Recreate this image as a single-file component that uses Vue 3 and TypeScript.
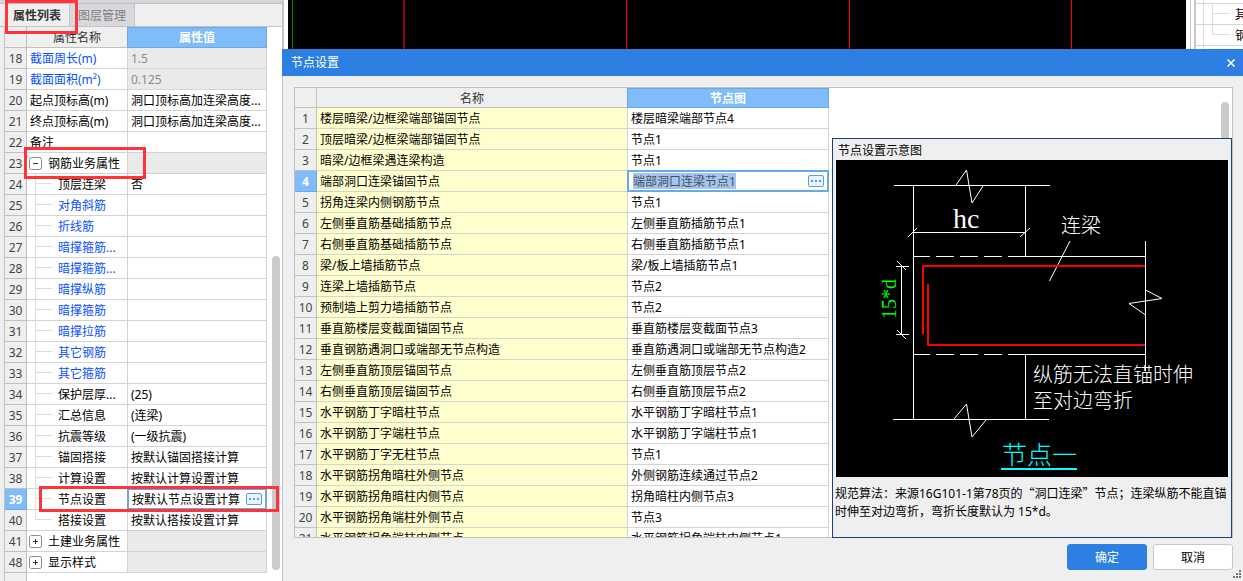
<script setup lang="ts">
import { ref } from 'vue'

type Kind = 'plain' | 'group' | 'child'

interface PropertyRow {
  no: number
  name: string
  value?: string
  kind: Kind
  link?: boolean
  readonly?: boolean
  open?: boolean
  last?: boolean
}

interface NodeRow {
  name: string
  node: string
}

const properties: PropertyRow[] = [
  { no: 18, name: '截面周长(m)', value: '1.5', kind: 'plain', link: true, readonly: true },
  { no: 19, name: '截面面积(m²)', value: '0.125', kind: 'plain', link: true, readonly: true },
  { no: 20, name: '起点顶标高(m)', value: '洞口顶标高加连梁高度...', kind: 'plain' },
  { no: 21, name: '终点顶标高(m)', value: '洞口顶标高加连梁高度...', kind: 'plain' },
  { no: 22, name: '备注', kind: 'plain' },
  { no: 23, name: '钢筋业务属性', kind: 'group', open: true },
  { no: 24, name: '顶层连梁', value: '否', kind: 'child' },
  { no: 25, name: '对角斜筋', kind: 'child', link: true },
  { no: 26, name: '折线筋', kind: 'child', link: true },
  { no: 27, name: '暗撑箍筋...', kind: 'child', link: true },
  { no: 28, name: '暗撑箍筋...', kind: 'child', link: true },
  { no: 29, name: '暗撑纵筋', kind: 'child', link: true },
  { no: 30, name: '暗撑箍筋', kind: 'child', link: true },
  { no: 31, name: '暗撑拉筋', kind: 'child', link: true },
  { no: 32, name: '其它钢筋', kind: 'child', link: true },
  { no: 33, name: '其它箍筋', kind: 'child', link: true },
  { no: 34, name: '保护层厚...', value: '(25)', kind: 'child' },
  { no: 35, name: '汇总信息', value: '(连梁)', kind: 'child' },
  { no: 36, name: '抗震等级', value: '(一级抗震)', kind: 'child' },
  { no: 37, name: '锚固搭接', value: '按默认锚固搭接计算', kind: 'child' },
  { no: 38, name: '计算设置', value: '按默认计算设置计算', kind: 'child' },
  { no: 39, name: '节点设置', value: '按默认节点设置计算', kind: 'child' },
  { no: 40, name: '搭接设置', value: '按默认搭接设置计算', kind: 'child', last: true },
  { no: 41, name: '土建业务属性', kind: 'group' },
  { no: 48, name: '显示样式', kind: 'group' },
]

const nodes = ref<NodeRow[]>([
  { name: '楼层暗梁/边框梁端部锚固节点', node: '楼层暗梁端部节点4' },
  { name: '顶层暗梁/边框梁端部锚固节点', node: '节点1' },
  { name: '暗梁/边框梁遇连梁构造', node: '节点1' },
  { name: '端部洞口连梁锚固节点', node: '端部洞口连梁节点1' },
  { name: '拐角连梁内侧钢筋节点', node: '节点1' },
  { name: '左侧垂直筋基础插筋节点', node: '左侧垂直筋插筋节点1' },
  { name: '右侧垂直筋基础插筋节点', node: '右侧垂直筋插筋节点1' },
  { name: '梁/板上墙插筋节点', node: '梁/板上墙插筋节点1' },
  { name: '连梁上墙插筋节点', node: '节点2' },
  { name: '预制墙上剪力墙插筋节点', node: '节点2' },
  { name: '垂直筋楼层变截面锚固节点', node: '垂直筋楼层变截面节点3' },
  { name: '垂直钢筋遇洞口或端部无节点构造', node: '垂直筋遇洞口或端部无节点构造2' },
  { name: '左侧垂直筋顶层锚固节点', node: '左侧垂直筋顶层节点2' },
  { name: '右侧垂直筋顶层锚固节点', node: '右侧垂直筋顶层节点2' },
  { name: '水平钢筋丁字暗柱节点', node: '水平钢筋丁字暗柱节点1' },
  { name: '水平钢筋丁字端柱节点', node: '水平钢筋丁字端柱节点1' },
  { name: '水平钢筋丁字无柱节点', node: '节点1' },
  { name: '水平钢筋拐角暗柱外侧节点', node: '外侧钢筋连续通过节点2' },
  { name: '水平钢筋拐角暗柱内侧节点', node: '拐角暗柱内侧节点3' },
  { name: '水平钢筋拐角端柱外侧节点', node: '节点3' },
  { name: '水平钢筋拐角端柱内侧节点', node: '水平钢筋拐角端柱内侧节点1' },
])

const currentProperty = ref(39)
const currentNode = ref(3)
</script>

<template>
  <div class="app">
    <aside class="panel">
      <div class="panel-cap"></div>
      <div class="tabs" role="tablist">
        <button class="tab active" role="tab" aria-selected="true">属性列表</button>
        <button class="tab" role="tab" aria-selected="false">图层管理</button>
      </div>
      <div class="panel-body">
        <table class="grid props">
          <colgroup>
            <col class="c-no" />
            <col class="c-name" />
            <col class="c-value" />
          </colgroup>
          <thead>
            <tr>
              <th></th>
              <th>属性名称</th>
              <th class="hot">属性值</th>
            </tr>
          </thead>
          <tbody>
            <tr v-for="row in properties" :key="row.no" @click="currentProperty = row.no">
              <td class="no" :class="{ hot: row.no === currentProperty }">{{ row.no }}</td>
              <td class="name" :class="[row.kind, { link: row.link }]">
                <div class="cell">
                  <button v-if="row.kind === 'group'" class="toggle" :aria-label="row.name">
                    <svg viewBox="0 0 13 13" width="13" height="13">
                      <rect x="0.5" y="0.5" width="12" height="12" rx="2" fill="#fff" stroke="#8a8a8a" />
                      <path d="M4 6.5h5" stroke="#333" />
                      <path v-if="!row.open" d="M6.5 4v5" stroke="#333" />
                    </svg>
                  </button>
                  <i v-if="row.kind === 'child'" class="branch" :class="{ last: row.last }"></i>
                  <span>{{ row.name }}</span>
                </div>
              </td>
              <td
                class="value"
                :class="{ dim: row.readonly || row.kind === 'group', editing: row.no === currentProperty }"
              >
                <div class="cell">
                  <span>{{ row.value }}</span>
                  <button v-if="row.no === currentProperty" class="more" aria-label="更多">
                    <i></i><i></i><i></i>
                  </button>
                </div>
              </td>
            </tr>
          </tbody>
        </table>
        <div class="track"><div class="thumb"></div></div>
      </div>
    </aside>

    <div class="main">
      <div class="backdrop">
        <div class="view">
          <svg width="100%" height="49">
            <rect x="4" width="1" height="49" fill="#008000" />
            <rect x="115" width="2" height="49" fill="#900008" />
            <rect x="338" width="1" height="49" fill="#f00" />
            <rect x="561" width="1" height="49" fill="#f00" />
            <rect x="783" width="1" height="49" fill="#f00" />
          </svg>
        </div>
        <div class="side">
          <div class="side-row"><span>其</span></div>
          <div class="side-row end"><span>钢</span></div>
        </div>
      </div>

      <section class="dialog" role="dialog" aria-labelledby="dialog-title">
        <header class="title">
          <span id="dialog-title">节点设置</span>
          <button class="close" aria-label="关闭">
            <svg viewBox="0 0 8 8" width="8" height="8">
              <path d="M0.5 0.5L7.5 7.5M7.5 0.5L0.5 7.5" stroke="#fff" stroke-width="1.5" />
            </svg>
          </button>
        </header>

        <div class="sheet">
          <div class="sheet-scroll">
            <table class="grid nodes">
              <colgroup>
                <col class="c-no" />
                <col class="c-name" />
                <col class="c-value" />
              </colgroup>
              <thead>
                <tr>
                  <th></th>
                  <th>名称</th>
                  <th class="hot">节点图</th>
                </tr>
              </thead>
              <tbody>
                <tr v-for="(row, i) in nodes" :key="i" @click="currentNode = i">
                  <td class="no" :class="{ hot: i === currentNode }">{{ i + 1 }}</td>
                  <td class="name">
                    <div class="cell"><span>{{ row.name }}</span></div>
                  </td>
                  <td class="value" :class="{ editing: i === currentNode }">
                    <div class="cell">
                      <template v-if="i === currentNode">
                        <input v-model="row.node" class="edit" type="text" :aria-label="row.name" />
                        <button class="more" aria-label="更多"><i></i><i></i><i></i></button>
                      </template>
                      <span v-else>{{ row.node }}</span>
                    </div>
                  </td>
                </tr>
              </tbody>
            </table>
          </div>
          <div class="sheet-thumb"></div>

          <figure class="preview">
            <figcaption>节点设置示意图</figcaption>
            <svg class="drawing" viewBox="0 0 392 317" width="392" height="317">
              <rect width="392" height="317" fill="#000" />
              <g fill="none" stroke="#fff" stroke-width="1">
                <path d="M58 25.5H214M77.5 25.5V259.5M189.5 25.5V96.5M189.5 194.5V259.5M57 259.5H213" />
                <path d="M120 25L130.5 10L136 43L147 26" />
                <path d="M118 259L130.5 244L136 277L150 260" />
                <path d="M77.5 72.5H189.5M72 77L81 68M184 77L194 68" />
                <path d="M77 96.5H94M100 96.5H118M124 96.5H142M148 96.5H166M172 96.5H310" />
                <path d="M77 194.5H94M100 194.5H118M124 194.5H142M148 194.5H166M172 194.5H310" />
                <path d="M309.5 81V211M309.5 130L326 138.5L293 143.5L309.5 155" />
                <path d="M234 81L213.5 121" />
                <path d="M65.5 106.5V174.5M60 106.5H73M60 174.5H73M61 101L70 110M61 170L70 179" />
              </g>
              <g fill="none" stroke="#f00" stroke-width="2">
                <path d="M309 106H87V174" />
                <path d="M92 124V185H309" />
              </g>
              <text class="latin" x="117" y="68" font-size="28" fill="#fff">hc</text>
              <text class="latin" transform="translate(60 159) rotate(-90)" font-size="20" fill="#0f0">15*d</text>
              <text class="song" x="225" y="73" font-size="20" fill="#fff">连梁</text>
              <text class="song" x="197" y="222" font-size="20" fill="#fff">纵筋无法直锚时伸</text>
              <text class="song" x="197" y="248" font-size="20" fill="#fff">至对边弯折</text>
              <text class="song" x="166" y="304" font-size="25" fill="#0ff">节点一</text>
              <path d="M165 309H241" stroke="#0ff" stroke-width="2" />
            </svg>
            <p class="note">
              规范算法：来源16G101-1第78页的<span class="cjk">“洞口连梁”</span>节点；连梁纵筋不能直锚时伸至对边弯折，弯折长度默认为 15*d。
            </p>
          </figure>
        </div>

        <footer class="actions">
          <button class="btn primary">确定</button>
          <button class="btn">取消</button>
        </footer>
        <svg class="grip" viewBox="0 0 8 8" width="8" height="8" fill="#6d7480">
          <path d="M6 0h2v2h-2zM3 3h2v2h-2zM6 3h2v2h-2zM0 6h2v2h-2zM3 6h2v2h-2zM6 6h2v2h-2z" />
        </svg>
      </section>
    </div>

    <div class="mark mark-tab"></div>
    <div class="mark mark-group"></div>
    <div class="mark mark-row"></div>
  </div>
</template>

<style>
body {
  margin: 0;
}
</style>

<style scoped>
.app {
  position: relative;
  display: flex;
  height: 100vh;
  overflow: hidden;
  background: #efefef;
  color: #000;
  font: 12px/20px 'Noto Sans', 'Noto Sans CJK SC', sans-serif;
}

.app * {
  box-sizing: border-box;
}

button,
input {
  margin: 0;
  padding: 0;
  border: 0;
  font: inherit;
}

/* Property panel */
.panel {
  display: flex;
  flex: none;
  flex-direction: column;
  width: 282px;
}

.panel-cap {
  flex: none;
  height: 4px;
  background: #d5d5dd;
  border-bottom: 1px solid #c0c0c0;
}

.tabs {
  display: flex;
  flex: none;
  height: 23px;
  padding-left: 5px;
  border-bottom: 1px solid #c3c3c3;
}

.tab {
  width: 65px;
  padding-top: 2px;
  border-right: 1px solid #c4c4c8;
  background: #d9d9dd;
  color: #808080;
}

.tab.active {
  background: #efefef;
  color: #333;
  font-weight: 700;
}

.panel-body {
  display: flex;
  flex: 1;
  min-height: 0;
  margin-left: 4px;
  border-left: 1px solid #c0c0c0;
  background: linear-gradient(90deg, #efefef 21px, #c0c0c0 21px 22px, #fff 22px);
}

.track {
  flex: 1;
  padding: 229px 2px 0 5px;
}

.thumb {
  width: 8px;
  height: 314px;
  border-radius: 4px;
  background: #cbcbcb;
}

/* Tables */
.grid {
  flex: none;
  align-self: flex-start;
  border-collapse: separate;
  border-spacing: 0;
  table-layout: fixed;
}

.props {
  width: 262px;
}

.nodes {
  width: 534px;
}

.c-no {
  width: 22px;
}

.props .c-name {
  width: 101px;
}

.nodes .c-name {
  width: 311px;
}

.grid th,
.grid td {
  height: 21px;
  padding: 0;
  border-right: 1px solid #d4d4d4;
  border-bottom: 1px solid #d4d4d4;
  background: #fff;
  line-height: 18px;
  text-align: left;
  white-space: nowrap;
}

.grid th {
  padding-top: 2px;
  border-color: #c0c0c0;
  background: #efefef;
  color: #333;
  font-weight: 400;
  text-align: center;
}

.nodes th {
  height: 20px;
  line-height: 17px;
}

.grid th.hot {
  border-color: #6aaaeb;
  background: #80bbfa;
  box-shadow: -1px 0 #6aaaeb, inset 0 1px #6aaaeb;
  color: #fff;
  font-weight: 700;
}

.grid td.no {
  padding-top: 2px;
  border-color: #c0c0c0;
  background: #efefef;
  color: #444;
  text-align: center;
}

.grid td.no.hot {
  border-color: #6aaaeb;
  background: #80bbfa;
  color: #fff;
  font-weight: 700;
}

.nodes td.name {
  background: #ffffcd;
}

.cell {
  display: flex;
  align-items: center;
  height: 20px;
  padding-left: 3px;
}

.cell > span {
  padding-top: 2px;
}

.link {
  color: #0a50ff;
}

.grid td.dim {
  background: #eaeaea;
  color: #8c8c8c;
}

.group .cell {
  gap: 6px;
  padding-left: 2px;
}

.child .cell {
  gap: 6px;
  padding-left: 8px;
}

.toggle {
  display: flex;
  background: none;
}

.branch {
  width: 17px;
  height: 21px;
  border-left: 1px solid #dedede;
  background: linear-gradient(#dedede, #dedede) 0 9px / 100% 1px no-repeat;
}

.branch.last {
  align-self: flex-start;
  height: 10px;
}

.editing .cell {
  justify-content: space-between;
  box-shadow: 0 0 0 1px #68a9ea, inset 0 0 0 1px #68a9ea;
  padding: 0 4px;
}

.nodes .editing .cell {
  padding-left: 5px;
}

.more {
  display: flex;
  align-items: center;
  justify-content: center;
  gap: 2px;
  width: 16px;
  height: 12px;
  border: 1px solid #5c9de0;
  border-radius: 2px;
  background: #e9f3fd;
}

.more i {
  width: 2px;
  height: 2px;
  background: #5c9de0;
}

.edit {
  width: 103px;
  height: 16px;
  padding-top: 1px;
  background: #a3c5ef;
  color: #47505c;
}

/* Area behind the dialog */
.main {
  display: flex;
  flex: 1;
  flex-direction: column;
  min-width: 0;
}

.backdrop {
  display: flex;
  flex: none;
  height: 49px;
  border-left: 2px solid #c4c4c8;
  background: #fff;
}

.view {
  flex: 1;
  margin: 0 4px;
  overflow: hidden;
  background: #000;
}

.view svg {
  display: block;
}

.side {
  flex: none;
  width: 53px;
  padding-top: 4px;
  border-left: 1px solid #bfc4ca;
  background: linear-gradient(90deg, #fff 3px, #c9c9c9 3px 5px, #fff 5px 12px, #dedede 12px 13px, #fff 13px);
}

.side-row {
  display: flex;
  align-items: center;
  height: 21px;
  margin-left: 4px;
  border-bottom: 1px solid #d4d4d4;
  overflow: hidden;
}

.side-row:first-child {
  box-shadow: 0 -1px #d4d4d4;
}

.side-row::before {
  flex: none;
  width: 17px;
  height: 21px;
  margin: 0 5px 0 17px;
  border-left: 1px solid #dedede;
  background: linear-gradient(#dedede, #dedede) 0 9px / 100% 1px no-repeat;
  content: '';
}

.side-row.end::before {
  align-self: flex-start;
  height: 10px;
}

.side-row span {
  padding-top: 2px;
}

/* Dialog */
.dialog {
  position: relative;
  display: flex;
  flex: 1;
  flex-direction: column;
  min-height: 0;
  background: #efefef;
  box-shadow: inset 1px 0 #b9c4d6;
}

.title {
  display: flex;
  flex: none;
  align-items: center;
  justify-content: space-between;
  height: 27px;
  padding: 0 8px 0 9px;
  background: #2d80e2;
  color: #fff;
}

.close {
  display: flex;
  background: none;
}

.sheet {
  position: relative;
  flex: 1;
  min-height: 0;
  margin: 11px 10px 0 12px;
  border: 1px solid #c0c0c0;
  background: #fff;
}

.sheet-scroll {
  height: 100%;
  overflow: hidden;
}

.sheet-thumb {
  position: absolute;
  top: 14px;
  right: 3px;
  width: 8px;
  height: 60px;
  border-radius: 4px;
  background: #cbcbcb;
}

.preview {
  position: absolute;
  right: 0;
  bottom: -1px;
  width: 400px;
  height: 400px;
  margin: 0;
  border: 1px solid #1f3f77;
  background: #efefef;
}

.preview figcaption {
  height: 21px;
  padding: 2px 0 0 5px;
}

.drawing {
  display: block;
  margin: 0 3px;
}

.latin {
  font-family: 'Liberation Serif', serif;
}

.song {
  font-family: 'Noto Sans CJK SC', sans-serif;
  font-weight: 300;
}

.note {
  margin: 0;
  padding: 7px 0 0 2px;
  line-height: 18px;
}

.cjk {
  font-family: 'Noto Sans CJK SC', sans-serif;
}

.actions {
  display: flex;
  flex: none;
  gap: 6px;
  justify-content: flex-end;
  padding: 6px 10px 11px;
}

.btn {
  width: 80px;
  height: 26px;
  padding-top: 2px;
  border: 1px solid #c9c9c9;
  border-radius: 3px;
  background: #fff;
  color: #000;
}

.btn.primary {
  border-color: #2d80e2;
  background: #2d80e2;
  color: #fff;
}

.grip {
  position: absolute;
  right: 2px;
  bottom: 3px;
}

/* Red callouts */
.mark {
  position: absolute;
  border: 3px solid #ff3338;
  pointer-events: none;
}

.mark-tab {
  top: 0;
  left: 5px;
  width: 73px;
  height: 34px;
}

.mark-group {
  top: 147px;
  left: 24px;
  width: 122px;
  height: 32px;
}

.mark-row {
  top: 486px;
  left: 39px;
  width: 240px;
  height: 26px;
}
</style>
